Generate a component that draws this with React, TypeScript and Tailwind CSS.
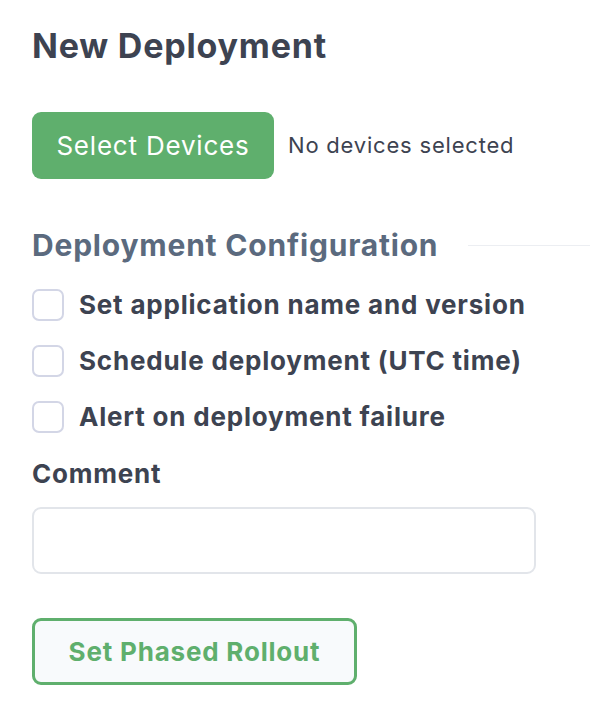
export default function App() {
  const options = [
    "Set application name and version",
    "Schedule deployment (UTC time)",
    "Alert on deployment failure",
  ]

  return (
    <div className="min-h-screen bg-white pl-8 pt-[22px] font-['Inter',sans-serif] tracking-[0.05em] text-[#3b4252]">
      <h1 className="text-[34px] leading-[48px] font-bold text-[#3d4351]">New Deployment</h1>

      {/* device picker */}
      <div className="mt-[42px] flex items-center gap-[14px]">
        <button className="h-[67px] w-[242px] rounded-[9px] bg-[#5faf6d] text-[26px] text-white">
          Select Devices
        </button>
        <span className="text-[22px] text-[#3d4351]">No devices selected</span>
      </div>

      {/* config section */}
      <div className="mt-[46px] flex items-center gap-[30px]">
        <h2 className="text-[30px] leading-[40px] font-bold whitespace-nowrap text-[#5b6a7e]">
          Deployment Configuration
        </h2>
        <div className="h-px flex-1 bg-[#eceef2]" />
      </div>

      <div className="mt-[24px] flex flex-col gap-[24px]">
        {options.map((label) => (
          <label key={label} className="flex items-center gap-[15px]">
            <span className="h-[32px] w-[32px] rounded-[7px] border-2 border-[#d3d6e6] bg-white" />
            <span className="text-[26px] leading-[32px] font-bold text-[#3d4351]">{label}</span>
          </label>
        ))}
      </div>

      <div className="mt-[25px] text-[26px] leading-[32px] font-bold text-[#3d4351]">Comment</div>
      <input className="mt-[17px] block h-[67px] w-[504px] rounded-[9px] border-2 border-[#e2e5ea] bg-white" />

      <button className="mt-[44px] h-[67px] w-[325px] rounded-[9px] border-[3px] border-[#5faf6d] bg-[#f8fafc] text-[26px] font-bold text-[#5faf6d]">
        Set Phased Rollout
      </button>
    </div>
  )
}
